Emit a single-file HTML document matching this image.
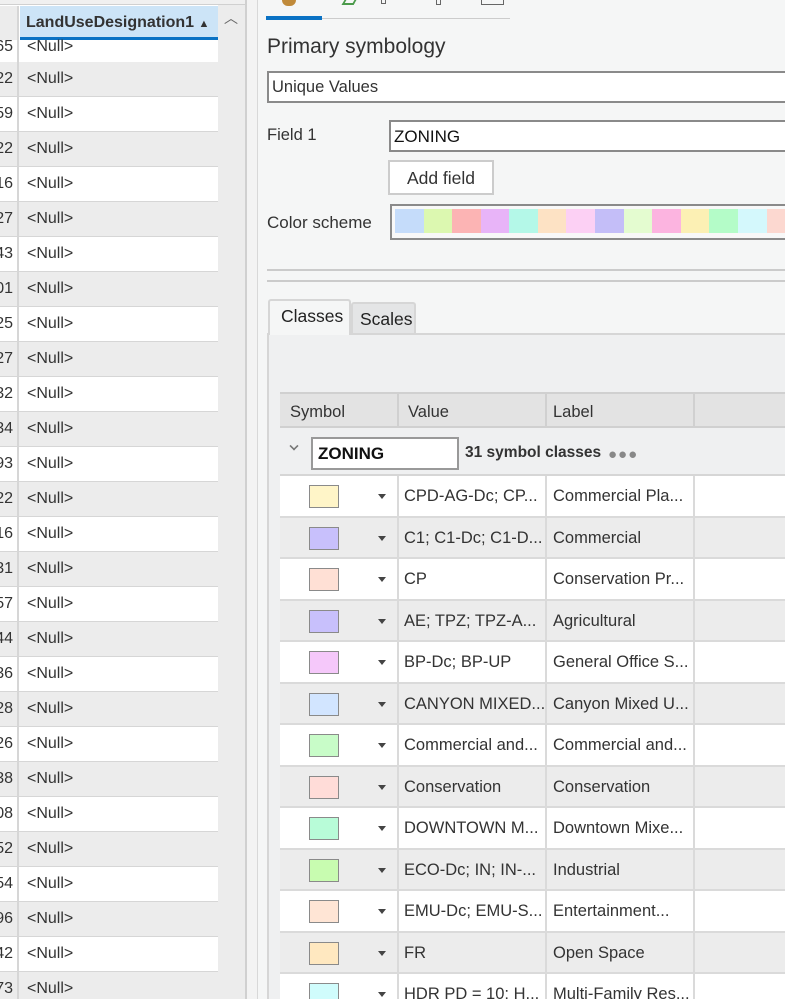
<!DOCTYPE html>
<html><head><meta charset="utf-8"><style>
*{margin:0;padding:0;box-sizing:border-box}
html,body{width:785px;height:999px;overflow:hidden}
body{background:#f5f6f6;font-family:"Segoe UI","Liberation Sans",sans-serif;color:#333;position:relative}
.a{position:absolute}
.lrow{position:absolute;left:0;width:218px;height:35px;border-bottom:1px solid #d6d6d6;font-size:16px}
.lrow .n{position:absolute;left:0;width:19px;height:100%;border-right:2px solid #d6d6d6;text-align:right;padding-right:4px;overflow:hidden;color:#333;white-space:nowrap;direction:rtl}
.lrow .v{position:absolute;left:27px;color:#333}
.trow{position:absolute;left:280px;width:505px;height:41.5px;border-bottom:2px solid #dadada;font-size:16.5px}
.trow div{position:absolute;top:0;height:100%;line-height:40px;white-space:nowrap;overflow:hidden}
.sw{position:absolute;left:29px;top:9px;width:30px;height:23px;border:1px solid #8a8a8a}
.arr{position:absolute;left:98px;top:18px;width:0;height:0;border-left:4px solid transparent;border-right:4px solid transparent;border-top:5px solid #444}
</style></head><body>
<div class="a" style="left:0;top:0;width:245px;height:999px;background:#fff"></div>
<div class="a" style="left:218px;top:0;width:27px;height:999px;background:#ececec"></div>
<div class="a" style="left:245px;top:0;width:2px;height:999px;background:#d0d0d0"></div>
<div class="a" style="left:247px;top:0;width:10px;height:999px;background:#f3f3f3"></div>
<div class="a" style="left:257px;top:0;width:1px;height:999px;background:#d8d8d8"></div>
<div class="a" style="left:0;top:0;width:245px;height:5px;border-bottom:1px solid #d0d0d0;background:#f0f0f0"></div>
<div class="a" style="left:0;top:6px;width:19px;height:34px;background:#ececec;border-right:2px solid #d6d6d6"></div>
<div class="a" style="left:20px;top:6px;width:198px;height:34px;background:#cce4f7;border-bottom:3px solid #0a72c4;font-weight:bold;font-size:16px;line-height:34px;padding-left:6px;color:#333">LandUseDesignation1 <span style="font-size:11px">▲</span></div>
<div class="a" style="left:224px;top:8px;font-size:14px;color:#666">︿</div>
<div id="lt"></div>
<div class="a" style="left:266px;top:16px;width:56px;height:4px;background:#0a72c4"></div>
<div class="a" style="left:322px;top:18px;width:188px;height:1px;background:#ccc"></div>
<div class="a" style="left:282px;top:0;width:14px;height:6px;background:#c08a3a;border-radius:0 0 6px 6px"></div>
<div class="a" style="left:343px;top:0;width:12px;height:5px;border:2px solid #4a9a4a;border-top:none;transform:skewX(-30deg)"></div>
<div class="a" style="left:381px;top:0;width:5px;height:4px;border:1px solid #666;border-top:none"></div>
<div class="a" style="left:436px;top:0;width:5px;height:5px;border:1px solid #666;border-top:none"></div>
<div class="a" style="left:481px;top:0;width:23px;height:5px;border:1px solid #666;border-top:none"></div>
<div class="a" style="left:267px;top:35px;font-size:21px;color:#333">Primary symbology</div>
<div class="a" style="left:267px;top:71px;width:530px;height:32px;border:2px solid #8a8a8a;background:#fff;font-size:16.5px;line-height:29px;padding-left:3px">Unique Values</div>
<div class="a" style="left:267px;top:126px;font-size:16.5px">Field 1</div>
<div class="a" style="left:389px;top:120px;width:410px;height:32px;border:2px solid #8a8a8a;background:#fff;font-size:17px;line-height:29px;padding-left:3px;color:#111">ZONING</div>
<div class="a" style="left:388px;top:160px;width:106px;height:35px;border:2px solid #ccc;background:#fff;font-size:17.5px;line-height:32px;text-align:center">Add field</div>
<div class="a" style="left:267px;top:213px;font-size:17px">Color scheme</div>
<div class="a" style="left:390px;top:204px;width:410px;height:36px;border:2px solid #8a8a8a;background:#f8f8f8;padding:3px 3px">
<div style="display:flex;height:24px" id="cs"></div></div>
<div class="a" style="left:267px;top:269px;width:518px;height:2px;background:#cbcbcb"></div>
<div class="a" style="left:267px;top:280px;width:518px;height:2px;background:#cbcbcb"></div>
<div class="a" style="left:267px;top:333px;width:530px;height:670px;border:2px solid #d6d6d6;background:#eff0f1"></div>
<div class="a" style="left:268px;top:299px;width:83px;height:36px;border:2px solid #d6d6d6;border-bottom:none;border-radius:3px 3px 0 0;background:#f5f6f6;font-size:17.5px;padding:5px 0 0 11px;color:#222">Classes</div>
<div class="a" style="left:351px;top:302px;width:65px;height:31px;border:2px solid #d6d6d6;border-bottom:none;border-radius:3px 3px 0 0;background:#e4e5e6;font-size:17.5px;padding:5px 0 0 7px;color:#222">Scales</div>
<div class="a" style="left:280px;top:392px;width:505px;height:36px;background:#e3e3e3;border-top:2px solid #d0d0d0;border-bottom:2px solid #d0d0d0;font-size:16.5px">
<div class="a" style="left:10px;line-height:36px">Symbol</div>
<div class="a" style="left:117px;top:0;height:34px;width:2px;background:#d0d0d0"></div>
<div class="a" style="left:128px;line-height:36px">Value</div>
<div class="a" style="left:265px;top:0;height:34px;width:2px;background:#d0d0d0"></div>
<div class="a" style="left:273px;line-height:36px">Label</div>
<div class="a" style="left:413px;top:0;height:34px;width:2px;background:#d0d0d0"></div>
</div>
<div class="a" style="left:280px;top:428px;width:505px;height:48px;background:#eff0f1;border-bottom:2px solid #d6d6d6">
<div class="a" style="left:10px;top:14px;width:8px;height:8px;border-right:2px solid #777;border-bottom:2px solid #777;transform:rotate(45deg) scale(0.8)"></div>
<div class="a" style="left:31px;top:9px;width:148px;height:33px;border:2px solid #999;background:#fff;font-weight:bold;font-size:17px;line-height:30px;padding-left:5px;color:#111">ZONING</div>
<div class="a" style="left:185px;top:16px;font-weight:bold;font-size:15.5px;color:#333">31 symbol classes</div>
<div class="a" style="left:328px;top:18px;font-size:15px;color:#888;letter-spacing:1px">●●●</div>
</div>
<div id="rt"></div>
<script>
var nums=["65","22","59","22","16","27","43","01","25","27","32","34","93","22","16","31","57","44","36","28","26","38","08","52","54","96","42","73"];
var h="";
for(var i=0;i<nums.length;i++){var t=i==0?40:62+(i-1)*35;var hh=i==0?23:35;var bg=i%2?"#ececec":"#fff";var lh=i==0?14:hh-1;
h+='<div class="lrow" style="top:'+t+'px;height:'+hh+'px;background:'+bg+'"><div class="n" style="line-height:'+lh+'px">'+nums[i]+'</div><div class="v" style="line-height:'+lh+'px">&lt;Null&gt;</div></div>';}
document.getElementById("lt").innerHTML=h;
var cs=["#c5dcfa","#dcf8b0","#fcb4b4","#e8b4f8","#b4f8e8","#fde2c4","#fcd0f4","#c4bef8","#e4fcd0","#fcb4e0","#fcf0b4","#b4fcc8","#d4f8fc","#fcd8d0"];
document.getElementById("cs").innerHTML=cs.map(function(c){return '<div style="width:29px;background:'+c+'"></div>'}).join("");
var rows=[["#fff5c8","CPD-AG-Dc; CP...","Commercial Pla..."],["#c8c0fc","C1; C1-Dc; C1-D...","Commercial"],["#ffe0d5","CP","Conservation Pr..."],["#c8c0fc","AE; TPZ; TPZ-A...","Agricultural"],["#f5c8fa","BP-Dc; BP-UP","General Office S..."],["#d2e5ff","CANYON MIXED...","Canyon Mixed U..."],["#c8fcc8","Commercial and...","Commercial and..."],["#ffdcd8","Conservation","Conservation"],["#b8fcd8","DOWNTOWN M...","Downtown Mixe..."],["#c8fcb0","ECO-Dc; IN; IN-...","Industrial"],["#ffe5d5","EMU-Dc; EMU-S...","Entertainment..."],["#ffe8c0","FR","Open Space"],["#d0fcfc","HDR PD = 10; H...","Multi-Family Res..."]];
h="";
for(var i=0;i<rows.length;i++){var t=476+i*41.5;var bg=i%2?"#ececec":"#fff";
h+='<div class="trow" style="top:'+t+'px;background:'+bg+'"><div style="left:0;width:117px"><span class="sw" style="background:'+rows[i][0]+'"></span><span class="arr"></span></div><div style="left:117px;width:2px;background:#dadada"></div><div style="left:124px;width:140px">'+rows[i][1]+'</div><div style="left:265px;width:2px;background:#dadada"></div><div style="left:273px;width:140px">'+rows[i][2]+'</div><div style="left:413px;width:2px;background:#dadada"></div></div>';}
document.getElementById("rt").innerHTML=h;
</script>
</body></html>
